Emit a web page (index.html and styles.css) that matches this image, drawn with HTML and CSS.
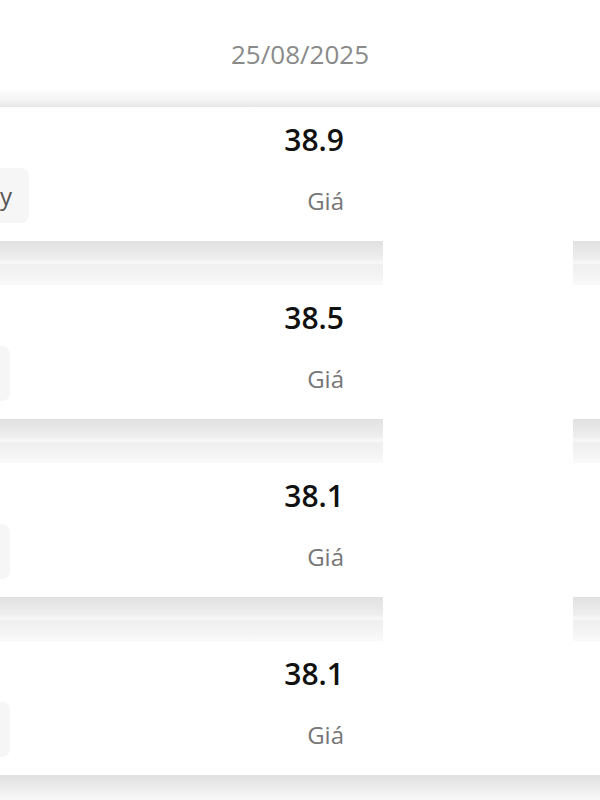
FILE: index.html
```html
<!DOCTYPE html>
<html lang="vi">
<head>
<meta charset="UTF-8" /><meta name="viewport"
content="width=device-width, initial-scale=1.0" />
<title>Giá</title>
<link rel="stylesheet" href="styles.css">
</head>
<body>
<header class="date">25/08/2025</header>
<div class="shade-top"></div>
<div class="card">
<div class="value">38.9</div>
<div class="chip wide">y</div>
<div class="label">Giá</div>
</div>
<div class="band"><span class="shade"></span><span></span><span class="shade"></span></div>
<div class="card">
<div class="value">38.5</div>
<div class="chip"></div>
<div class="label">Giá</div>
</div>
<div class="band"><span class="shade"></span><span></span><span class="shade"></span></div>
<div class="card">
<div class="value">38.1</div>
<div class="chip"></div>
<div class="label">Giá</div>
</div>
<div class="band"><span class="shade"></span><span></span><span class="shade"></span></div>
<div class="card">
<div class="value">38.1</div>
<div class="chip"></div>
<div class="label">Giá</div>
</div>
<div class="band-end"></div>
</body>
</html>
```

FILE: styles.css
```css
body { margin: 0; background: #fff; font-family: "Open Sans", "Noto Sans", sans-serif; overflow: hidden; }
.date { height: 90px; box-sizing: border-box; padding-top: 38px; text-align: center;
font-size: 26px; line-height: 32px; color: #8a8a8a; }
.shade-top { height: 17px; background: linear-gradient(#fdfdfd, #f3f3f3 60%, #e7e7e7); }
.card { height: 134px; box-sizing: border-box; padding: 14px 256px 0 0; background: #fff;
display: grid; grid-template-columns: auto 1fr; grid-template-rows: 38px 55px; row-gap: 9px; }
.value { grid-column: 1 / 3; text-align: right; font-size: 30px; line-height: 38px;
font-weight: 600; color: #111; }
.chip { width: 10px; background: #f6f6f6; border-radius: 0 8px 8px 0; }
.chip.wide { width: 12px; padding-right: 17px; font-size: 24px; line-height: 56px; color: #555;
text-align: right; }
.label { text-align: right; align-self: end; margin-bottom: 6px; font-size: 24px;
line-height: 32px; color: #777; }
.band { height: 44px; display: grid; grid-template-columns: 383px 190px 1fr; }
.band .shade { background: linear-gradient(#e1e1e1, #eeeeee 40%, #f5f5f5 46%, #f8f8f8 50%,
#efefef 54%, #f4f4f4 80%, #fafafa); }
.band-end { height: 30px; background: linear-gradient(#e0e0e0, #ececec 40%, #f7f7f7 80%, #fff); }
```
